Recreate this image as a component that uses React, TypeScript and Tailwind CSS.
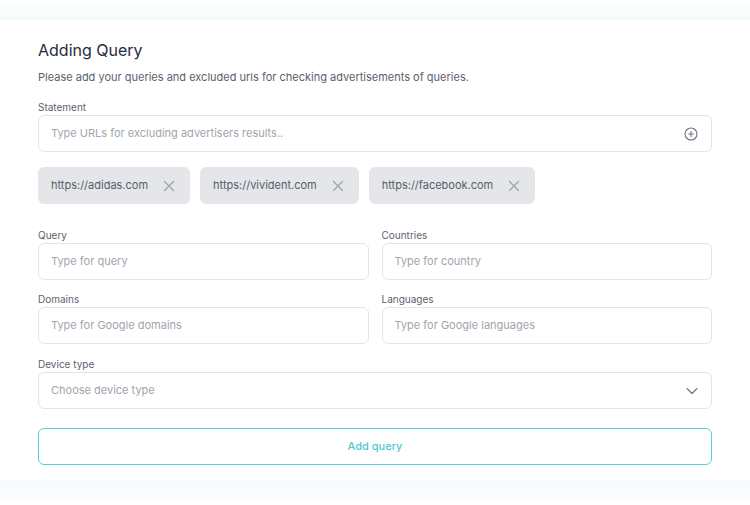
import React from "react";

const font = { fontFamily: "Inter, 'Noto Sans', sans-serif" };

function XIcon() {
  return (
    <svg width="12" height="12" viewBox="0 0 12 12" fill="none" stroke="#9ca3af" strokeWidth="1.2" strokeLinecap="round">
      <path d="M1.5 1.5L10.5 10.5M10.5 1.5L1.5 10.5" />
    </svg>
  );
}

function Field({ label, placeholder, right }: { label: string; placeholder: string; right?: React.ReactNode }) {
  return (
    <div className="flex flex-col">
      <div className="text-[10px] leading-[14px] text-[#5b626e] mb-[1px]">{label}</div>
      <div className="h-[37px] shrink-0 rounded-[6px] border border-[#e3e5e9] bg-white flex items-center justify-between pl-[12px] pr-[13px]">
        <span className="text-[11px] text-[#a0a5ae]">{placeholder}</span>
        {right}
      </div>
    </div>
  );
}

export default function App() {
  const chips = ["https://adidas.com", "https://vivident.com", "https://facebook.com"];
  return (
    <div className="w-[750px] h-[505px] bg-white flex flex-col" style={font}>
      <div className="h-[20px] shrink-0 bg-gradient-to-b from-white to-[#f4fbfb]" />
      <div className="bg-white px-[38px] pt-[18px] flex flex-col h-[460px] shrink-0">
        <h1 className="text-[16px] leading-[24px] text-[#252d3a] font-normal">Adding Query</h1>
        <p className="mt-[7px] text-[11px] leading-[16px] text-[#5a616d]">
          Please add your queries and excluded urls for checking advertisements of queries.
        </p>
        <div className="mt-[15px]">
          <Field
            label="Statement"
            placeholder="Type URLs for excluding advertisers results.."
            right={
              <svg width="14" height="14" viewBox="0 0 14 14" fill="none" stroke="#6b7280" strokeWidth="1.1" strokeLinecap="round">
                <circle cx="7" cy="7" r="6" />
                <path d="M7 4.6V9.4M4.6 7H9.4" />
              </svg>
            }
          />
        </div>
        <div className="mt-[15px] flex gap-[10px]">
          {chips.map((c) => (
            <div key={c} className="h-[37px] rounded-[6px] bg-[#e5e6ea] flex items-center pl-[13px] pr-[15px] gap-[15px]">
              <span className="text-[11px] text-[#565e6a]">{c}</span>
              <XIcon />
            </div>
          ))}
        </div>
        <div className="mt-[24px] grid grid-cols-2 gap-x-[13px] gap-y-[12px]">
          <Field label="Query" placeholder="Type for query" />
          <Field label="Countries" placeholder="Type for country" />
          <Field label="Domains" placeholder="Type for Google domains" />
          <Field label="Languages" placeholder="Type for Google languages" />
        </div>
        <div className="mt-[13px]">
          <Field
            label="Device type"
            placeholder="Choose device type"
            right={
              <svg width="12" height="8" viewBox="0 0 12 8" fill="none" stroke="#6b7280" strokeWidth="1.1" strokeLinecap="round" strokeLinejoin="round">
                <path d="M1 1.5L6 6.5L11 1.5" />
              </svg>
            }
          />
        </div>
        <button className="mt-[19px] h-[37px] shrink-0 rounded-[6px] border border-[#5ccfd5] bg-white text-[11px] font-medium text-[#4fc9cf]">
          Add query
        </button>
      </div>
      <div className="flex-1 bg-gradient-to-b from-[#f3fbfb] to-white" />
    </div>
  );
}
